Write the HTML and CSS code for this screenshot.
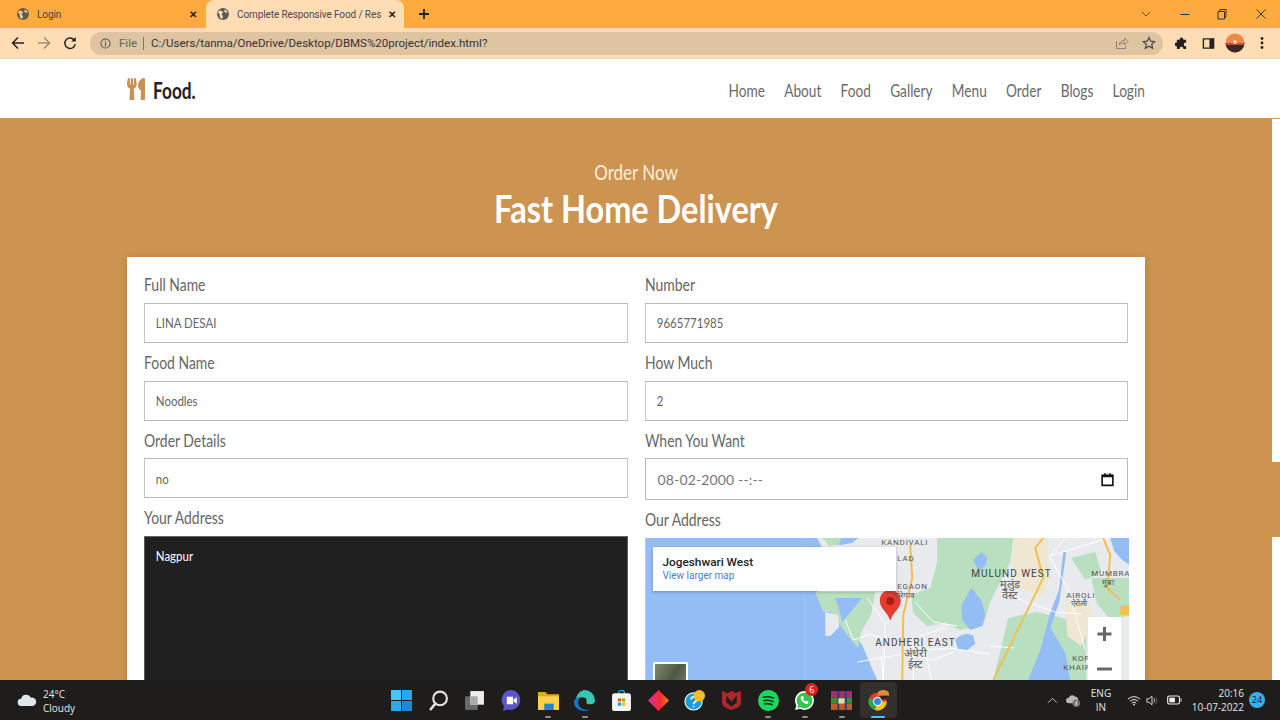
FILE: index.html
```html
<!DOCTYPE html>
<html lang="en">
<head>
  <meta charset="UTF-8">
  <meta name="viewport" content="width=device-width, initial-scale=1.0">
  <title>Complete Responsive Food / Restaurant Website</title>
  <link rel="stylesheet" href="styles.css">
</head>
<body>
  <!-- browser tabs -->
  <div class="tabstrip">
    <div class="tab">
      <svg class="globe" viewBox="0 0 12 12"><circle cx="6" cy="6" r="6" fill="#5f5c58"/><path d="M2 2.500l3 .5 1 1.500-1.500 1.500L6 8.500 5 11 3 9.500 2.500 6 1 4.500zM8 1.500l2 1.500.5 2-2-.5L7 3z" fill="#ffc680"/></svg>
      <span class="tab-title">Login</span>
      <span class="tab-close">✕</span>
    </div>
    <div class="tab active">
      <svg class="globe" viewBox="0 0 12 12"><circle cx="6" cy="6" r="6" fill="#5f5c58"/><path d="M2 2.500l3 .5 1 1.500-1.500 1.500L6 8.500 5 11 3 9.500 2.500 6 1 4.500zM8 1.500l2 1.500.5 2-2-.5L7 3z" fill="#fedcb4"/></svg>
      <span class="tab-title">Complete Responsive Food / Res</span>
      <span class="tab-close">✕</span>
    </div>
    <svg class="new-tab" viewBox="0 0 12 12"><path d="M6 1v10M1 6h10" stroke="#222" stroke-width="1.800"/></svg>
    <div class="window-controls">
      <svg viewBox="0 0 12 12"><path d="M2 4l4 4 4-4" fill="none" stroke="#6b4a1c"/></svg>
      <svg viewBox="0 0 12 12"><path d="M1.500 6.500h9" stroke="#333"/></svg>
      <svg class="restore" viewBox="0 0 12 12"><path d="M2 3.500h6.500V11H2zM4 3.500V1.500h6V9H8.500" fill="none" stroke="#333"/></svg>
      <svg viewBox="0 0 12 12"><path d="M1.500 1.500l9 9M10.500 1.500l-9 9" stroke="#333"/></svg>
    </div>
  </div>

  <!-- address bar -->
  <div class="toolbar">
    <svg class="nav-icon" viewBox="0 0 14 14"><path d="M13 7H2M7 1.500L1.500 7 7 12.500" fill="none" stroke="#222" stroke-width="1.500"/></svg>
    <svg class="nav-icon" viewBox="0 0 14 14"><path d="M1 7h11M7 1.500L12.500 7 7 12.500" fill="none" stroke="#a08c74" stroke-width="1.500"/></svg>
    <svg class="nav-icon" viewBox="0 0 14 14"><path d="M11.500 4.500A5.200 5.200 0 1 0 12.200 8" fill="none" stroke="#222" stroke-width="1.500"/><path d="M12.800 1v4.500H8.300z" fill="#222"/></svg>
    <div class="omnibox">
      <svg class="info-icon" viewBox="0 0 12 12"><circle cx="6" cy="6" r="5" fill="none" stroke="#555" stroke-width="1.100"/><path d="M6 5v4M6 3v1.200" stroke="#555" stroke-width="1.200"/></svg>
      <span class="scheme">File</span>
      <span class="url">C:/Users/tanma/OneDrive/Desktop/DBMS%20project/index.html?</span>
      <svg class="omni-icon" viewBox="0 0 14 14"><path d="M1.500 5v7.500h9V10M4 9c.500-3 3-4.500 5.500-4.500V2L13 5.500 9.500 9V6.800C7.500 6.800 5.500 7.500 4 9z" fill="none" stroke="#8f8474"/></svg>
      <svg class="omni-icon" viewBox="0 0 14 14"><path d="M7 1.500l1.700 3.700 4 .4-3 2.700.9 4L7 10.200l-3.600 2.100.9-4-3-2.700 4-.4z" fill="none" stroke="#444" stroke-width="1.200"/></svg>
    </div>
    <svg class="tool-icon puzzle" viewBox="0 0 14 14"><path d="M5 2.500a2 2 0 0 1 4 0V3h3v3h-.500a2 2 0 0 0 0 4h.500v3H9v-.500a2 2 0 0 0-4 0v.500H2v-3h-.500a2 2 0 0 1 0-4H2V3h3z" fill="#222"/></svg>
    <svg class="tool-icon" viewBox="0 0 14 14"><path d="M1.500 2h11v10h-11z" fill="none" stroke="#222" stroke-width="1.500"/><path d="M8 2h4.500v10H8z" fill="#222"/></svg>
    <svg class="avatar" viewBox="0 0 20 20"><defs><clipPath id="avatarClip"><circle cx="10" cy="10" r="9.500"/></clipPath></defs><g clip-path="url(#avatarClip)"><path d="M0 0h20v10H0z" fill="#ec8a4e"/><path d="M0 10h20v10H0z" fill="#3b2a26"/><path d="M0 10h20v2H0z" fill="#a85a3a"/><circle cx="10" cy="9" r="2" fill="#fbd9a0"/></g></svg>
    <svg class="menu-dots" viewBox="0 0 4 14"><circle cx="2" cy="2.500" r="1.400" fill="#222"/><circle cx="2" cy="7" r="1.400" fill="#222"/><circle cx="2" cy="11.500" r="1.400" fill="#222"/></svg>
  </div>

  <header class="site-header">
    <a class="logo" href="#">
      <svg class="logo-icon" viewBox="0 0 416 512"><path d="M207.900 15.200c.8 4.700 16.100 94.500 16.100 128.800 0 52.300-27.800 89.600-68.900 104.600L168 486.700c.7 13.700-10.200 25.300-24 25.300H80c-13.700 0-24.700-11.500-24-25.300l12.900-238.100C27.700 233.600 0 196.200 0 144 0 109.600 15.300 19.900 16.100 15.200 19.300-5.100 61.400-5.400 64 16.300v141.200c1.300 3.400 15.100 3.200 16 0 1.400-25.300 7.900-139.200 8-141.800 3.300-20.800 44.700-20.800 47.900 0 .2 2.700 6.600 116.500 8 141.800.9 3.200 14.800 3.400 16 0V16.300c2.600-21.600 44.800-21.400 48-1.100zm119.200 285.700l-15 185.100c-1.200 14 9.900 26 23.900 26h56c13.300 0 24-10.700 24-24V24c0-13.200-10.700-24-24-24-82.500 0-221.400 178.500-64.900 300.900z"/></svg>
      <span class="logo-text">Food.</span>
    </a>
    <nav class="site-nav">
      <a href="#">Home</a>
      <a href="#">About</a>
      <a href="#">Food</a>
      <a href="#">Gallery</a>
      <a href="#">Menu</a>
      <a href="#">Order</a>
      <a href="#">Blogs</a>
      <a href="#">Login</a>
    </nav>
  </header>

  <div class="page-row">
    <main class="order-section">
      <h3 class="sub-heading">Order Now</h3>
      <h1 class="heading">Fast Home Delivery</h1>

      <form class="order-form">
        <div class="form-col">
          <div class="field">
            <label>Full Name</label>
            <input type="text" value="LINA DESAI">
          </div>
          <div class="field">
            <label>Food Name</label>
            <input type="text" value="Noodles">
          </div>
          <div class="field">
            <label>Order Details</label>
            <input type="text" value="no">
          </div>
          <div class="field">
            <label>Your Address</label>
            <textarea>Nagpur</textarea>
          </div>
        </div>

        <div class="form-col">
          <div class="field">
            <label>Number</label>
            <input type="text" value="9665771985">
          </div>
          <div class="field">
            <label>How Much</label>
            <input type="text" value="2">
          </div>
          <div class="field">
            <label>When You Want</label>
            <div class="date-input">
              <span>08-02-2000 --:--</span>
              <svg viewBox="0 0 14 14"><path d="M2 3h10v9.500H2z" fill="none" stroke="#111" stroke-width="1.500"/><path d="M2 2.500h10V5H2zM4 1h1.200v2H4zM8.800 1H10v2H8.800z" fill="#111"/></svg>
            </div>
          </div>
          <div class="field">
            <label>Our Address</label>
            <div class="map">
              <svg class="map-canvas" viewBox="0 0 484 142">
                <path d="M0 0h484v142H0z" fill="#94bdf5"/>
                <path d="M160 0v142" stroke="#a6c8f6" stroke-width=".6"/>
                <!-- land -->
                <path d="M172 0l6 12-8 18 2 24 14 8 11 19 20 26 10 24 5 11h252V0z" fill="#e8eaed"/>
                <path d="M177 0h36l-6 5-12 2-12-2z" fill="#94bdf5"/>
                <!-- green patches -->
                <path d="M170 54l60 0-4 22-10 18-3 16-12-14-15-22-8 0z" fill="#b7dfc0"/>
                <path d="M190 60h27l-20 24-3-12z" fill="#94bdf5"/>
                <path d="M180 74l13 3 1 12-9 9h-5z" fill="#e8eaed"/>
                <path d="M178 0h18l-2 6-10 2z" fill="#b7dfc0"/>
                <path d="M292 0h76l-3 24-20 40-7 23-23 5-15-7-18 3-14-13-2-18 19-7 7-26z" fill="#b7dfc0"/>
                <path d="M368 0h34l2 40-6 18-24-8-8-26z" fill="#efe7d2"/>
                <path d="M363 80l28-6 18 4 32 8v56h-93z" fill="#b7dfc0"/>
                <path d="M446 40h38v38l-20 2-12-14zM426 20l24-6 6 20-16 8z" fill="#b7dfc0"/>
                <path d="M420 62l24 2 4 18-12 26-14-10z" fill="#efe7d2"/>
                <!-- water -->
                <path d="M328 22l8-8 6 6-2 8-7 4zM316 68l10-18 10 12 4 14-3 12-12 4-8-10z" fill="#94bdf5"/>
                <path d="M310 102c4-6 14-8 18-4l2 8-8 6-9 0z" fill="#94bdf5"/>
                <path d="M418 14h3l-7 50-9 26 15 25 5 27h-42l12-30 10-37 9-24z" fill="#94bdf5"/>
                <path d="M465 0h19v27l-8-6-7-8z" fill="#94bdf5"/>
                <!-- roads -->
                <path d="M222 60l18 26 4-4M200 82l8 20 18-6 22 10M240 86l-2 56M270 64l18 20 24 4M300 90l-26 8M212 124l46-8 30 6 20-8M258 106l24 6 22-2 40 6M345 108l24 2M366 56l14 8 30 10 26 2M268 104v38M236 118l2 24M280 112l6 30M420 0l-16 18 26-8 34-10M404 18l18 32 6 20 12 42" fill="none" stroke="#fff" stroke-width="1"/>
                <path d="M265 7l2 33-9 37-1 65M398 0l-8 10 8 30-50 102M458 0l7 17-3 33 13 12" fill="none" stroke="#f2c04e" stroke-width="2"/>
                <rect x="475" y="67" width="10" height="10" rx="2" fill="#f2c04e"/>
                <path d="M245 52c-6 0-10.500 4.500-10.500 10.500 0 8 7.500 11 10.500 20 3-9 10.500-12 10.500-20C255.500 56.500 251 52 245 52z" fill="#e53b30"/>
                <circle cx="245" cy="63" r="4" fill="#a81e16"/>
                <g class="map-label">
                  <text x="236" y="7">KANDIVALI</text>
                  <text x="252" y="23">LAD</text>
                  <text x="252" y="51">EGAON</text>
                  <text x="326" y="39" class="big">MULUND WEST</text>
                  <text x="446" y="38">MUMBRA</text>
                  <text x="421" y="60">AIROLI</text>
                  <text x="230" y="108" class="big">ANDHERI EAST</text>
                  <text x="427" y="123">KOP</text>
                  <text x="418" y="132">KHAIR</text>
                </g>
                <g class="map-label local">
                  <text x="365" y="50">मुलुंड</text>
                  <text x="365" y="61">वेस्ट</text>
                  <text x="270" y="119">अंधेरी</text>
                  <text x="270" y="130">ईस्ट</text>
                  <text x="463" y="47" class="small">मुंब्रा</text>
                  <text x="434" y="68" class="small">ऐरोली</text>
                  <text x="258" y="60" class="small">गोरेगाव</text>
                </g>
              </svg>
              <div class="map-card">
                <div class="map-place">Jogeshwari West</div>
                <a class="map-link" href="#">View larger map</a>
              </div>
              <div class="map-thumb"></div>
              <div class="map-zoom">
                <svg viewBox="0 0 33 35"><path d="M16.500 10v14M9.500 17h14" stroke="#666" stroke-width="3"/></svg>
                <svg viewBox="0 0 33 35"><path d="M9 17h15" stroke="#666" stroke-width="3"/></svg>
              </div>
            </div>
          </div>
        </div>
      </form>
    </main>
    <div class="scroll-strip">
      <div class="strip-white strip-top"></div>
      <div class="strip-gap"></div>
      <div class="strip-white strip-bottom"></div>
    </div>
  </div>

  <!-- windows taskbar -->
  <footer class="taskbar">
    <div class="weather">
      <svg viewBox="0 0 22 14"><path d="M5 13.500a4 4 0 0 1-.5-8 6 6 0 0 1 11-1 4.500 4.500 0 0 1 2 9z" fill="#dfe6ee"/></svg>
      <div class="weather-text"><div>24°C</div><div>Cloudy</div></div>
    </div>
    <div class="task-icons">
      <div class="task-item"><svg viewBox="0 0 20 20"><path d="M0 0h9.500v9.500H0z" fill="#4cc2ff"/><path d="M10.500 0H20v9.500h-9.500z" fill="#29a8ee"/><path d="M0 10.500h9.500V20H0z" fill="#29a8ee"/><path d="M10.500 10.500H20V20h-9.500z" fill="#1a8ad8"/></svg></div>
      <div class="task-item"><svg viewBox="0 0 20 20"><circle cx="11.500" cy="8" r="6.500" fill="none" stroke="#e4e4e4" stroke-width="2"/><path d="M7 13l-5 6" stroke="#e4e4e4" stroke-width="2.400"/></svg></div>
      <div class="task-item"><svg viewBox="0 0 20 20"><path d="M1 6h12v13H1z" fill="#6a6a6a"/><path d="M6 1h13v13H6z" fill="#ededed"/><path d="M6 6h7v8H6z" fill="#aaa"/></svg></div>
      <div class="task-item"><svg viewBox="0 0 20 20"><path d="M10 0a9.500 9.500 0 1 1-4 18.500L2 20l.8-4.500A9.500 9.500 0 0 1 10 0z" fill="#5b57c9"/><path d="M5.500 6.500h6v7h-6zM12 9l3-2v6l-3-2z" fill="#fff"/></svg></div>
      <div class="task-item running"><svg viewBox="0 0 20 20"><path d="M0 2h7l2 2h11v4H0z" fill="#e3a91e"/><path d="M0 6h20v13H0z" fill="#fbd24a"/><path d="M6 13h9v6H6z" fill="#1d87d6"/></svg></div>
      <div class="task-item running"><svg viewBox="0 0 20 20"><path d="M10 0a10 10 0 0 1 10 10c0 3-3 4-6 3.500-3 0-2-2.500-2-3.500 0-2-2-3-4-3-4 0-6 3-6 5A10 10 0 0 1 10 0z" fill="#37c6b0"/><path d="M0 12c0-3 2-5 6-5 1 0-2 1-2 5 0 4 4 7 8 7 2 0 3-.5 4-1-2 1.500-4 2-6 2-6 0-10-4-10-8z" fill="#1a73c9"/></svg></div>
      <div class="task-item"><svg viewBox="0 0 20 20"><path d="M7 4c0-5 6-5 6 0" fill="none" stroke="#3aa0d8" stroke-width="1.300"/><rect x="1" y="3" width="18" height="17" rx="2.500" fill="#f4f4f4"/><path d="M6.500 8h3v3h-3z" fill="#e8532a"/><path d="M10.500 8h3v3h-3z" fill="#7fba00"/><path d="M6.500 12h3v3h-3z" fill="#00a4ef"/><path d="M10.500 12h3v3h-3z" fill="#ffb900"/></svg></div>
      <div class="task-item"><svg viewBox="0 0 20 20"><defs><linearGradient id="diamondFill" x1="0" y1="0" x2="1" y2="0"><stop offset="0" stop-color="#e02aa0"/><stop offset=".6" stop-color="#f0302c"/><stop offset="1" stop-color="#f57c14"/></linearGradient></defs><path d="M10 0l10 10-10 10L0 10z" fill="url(#diamondFill)"/></svg></div>
      <div class="task-item"><svg viewBox="0 0 22 22"><circle cx="10" cy="12" r="9" fill="#1f9ad6" stroke="#dff" stroke-width="1.200"/><path d="M7.500 10a2.800 2.800 0 1 1 4 2.500c-1 .5-1.500 1-1.500 2.500M10 16.500v1.500" fill="none" stroke="#fff" stroke-width="1.800"/><circle cx="16" cy="6" r="6" fill="#f6bd2a"/></svg></div>
      <div class="task-item"><svg viewBox="0 0 20 20"><path d="M1 1l5 2 4-2 4 2 5-2v11c0 4-5 6-9 7-4-1-9-3-9-7z" fill="#b2262b"/><path d="M5 5l5 6 5-6v7l-5 4-5-4z" fill="#1f1d1c"/></svg></div>
      <div class="task-item running"><svg viewBox="0 0 20 20"><circle cx="10" cy="10" r="10" fill="#1ed760"/><path d="M4.500 7c4-1 8-.8 11 1M5 10.300c3.500-.8 7-.5 9.800 1M5.500 13.300c3-.6 6-.4 8.500.9" fill="none" stroke="#14311f" stroke-width="1.500"/></svg></div>
      <div class="task-item running"><svg viewBox="0 0 20 20"><path d="M10 1a9 9 0 0 1 0 18c-1.500 0-3-.4-4.300-1.100L1 19l1.200-4.500A9 9 0 0 1 10 1z" fill="#fff"/><path d="M10 2.500a7.500 7.500 0 0 1 0 15c-1.300 0-2.700-.4-3.900-1.100l-3 .8.800-2.900A7.500 7.500 0 0 1 10 2.500z" fill="#37c34c"/><path d="M7 6c-1 1-1 3 1 5s4 3 5 2l1-1.500-2-1.500-1 1c-1-.5-2-1.500-2.300-2.500l1-1L8.300 5.500z" fill="#fff"/></svg><span class="notify-badge">6</span></div>
      <div class="task-item running"><svg viewBox="0 0 20 20"><path d="M0 1h20v6H0z" fill="#a92c6b"/><path d="M0 7h20v6H0z" fill="#3d8c3a"/><path d="M0 13h20v6H0z" fill="#c75a22"/><path d="M6 1h2v18H6zM13 1h2v18h-2z" fill="#2c3f88"/><path d="M7 8h6v5H7z" fill="#e5d9a6"/></svg></div>
      <div class="task-item current"><svg viewBox="0 0 22 22"><circle cx="10" cy="12" r="9.500" fill="#e0392d"/><path d="M10 12L19.500 12A9.500 9.500 0 0 1 7 21z" fill="#f5c518"/><path d="M10 12L7 21A9.500 9.500 0 0 1 1.300 8z" fill="#2ea44f"/><circle cx="10" cy="12" r="4.800" fill="#fff"/><circle cx="10" cy="12" r="3.700" fill="#3f83e6"/><path d="M10 4a6 4 0 0 1 12 0v2H10z" fill="#e08a3c"/><path d="M12 6h9l-3 4h-4z" fill="#33231c"/></svg></div>
    </div>
    <div class="tray">
      <svg class="tray-chevron" viewBox="0 0 12 8"><path d="M1 6.500l5-5 5 5" fill="none" stroke="#d8d8d8"/></svg>
      <svg class="tray-cloud" viewBox="0 0 16 14"><path d="M3 10a3 3 0 0 1 0-6 4 4 0 0 1 7-1 3 3 0 0 1 3 4H8v3z" fill="#b8b8b8"/><circle cx="11" cy="10" r="4" fill="#777"/><path d="M11 8v4" stroke="#eee" stroke-width="1.200"/></svg>
      <div class="tray-lang"><div>ENG</div><div>IN</div></div>
      <svg class="tray-wifi" viewBox="0 0 16 12"><path d="M1 4.500a10 10 0 0 1 14 0M3.300 6.800a6.800 6.800 0 0 1 9.400 0M5.500 9a3.500 3.500 0 0 1 5 0" fill="none" stroke="#eee" stroke-width="1.100"/><circle cx="8" cy="10.700" r="1" fill="#eee"/></svg>
      <svg class="tray-sound" viewBox="0 0 14 12"><path d="M1 4h2.500L7 1v10L3.500 8H1z" fill="none" stroke="#eee"/><path d="M9 3.500a3.500 3.500 0 0 1 0 5" fill="none" stroke="#eee"/><path d="M11 2a6 6 0 0 1 0 8" fill="none" stroke="#666"/></svg>
      <svg class="tray-battery" viewBox="0 0 16 10"><rect x=".7" y=".7" width="12.600" height="8.600" rx="2" fill="none" stroke="#eee" stroke-width="1.200"/><rect x="2.500" y="2.500" width="6" height="5" fill="#eee"/><path d="M14.500 3.500h1v3h-1z" fill="#eee"/></svg>
      <div class="tray-clock"><div>20:16</div><div>10-07-2022</div></div>
      <span class="tray-badge">24</span>
    </div>
  </footer>
</body>
</html>
```

FILE: styles.css
```css
* {
  box-sizing: border-box;
}

html, body {
  height: 100%;
}

body {
  margin: 0;
  height: 720px;
  display: flex;
  flex-direction: column;
  overflow: hidden;
  font-family: Lato, "Liberation Sans", sans-serif;
  background: #cc9450;
}

/* browser chrome */
.tabstrip {
  height: 28px;
  flex: none;
  display: flex;
  align-items: center;
  background: #ffaa3e;
  font-family: Roboto, sans-serif;
  font-size: 10px;
  color: #444;
}

.tab {
  width: 206px;
  height: 28px;
  display: flex;
  align-items: center;
  padding: 0 5px 0 17px;
  flex: none;
}

.tab.active {
  width: 198px;
  padding: 0 4px 0 11px;
  background: #fedcb4;
  border-radius: 8px 8px 0 0;
  color: #4a4a4a;
}

.globe {
  width: 12px;
  height: 12px;
  flex: none;
  margin-right: 8px;
}

.tab-title {
  flex: 1;
  white-space: nowrap;
  overflow: hidden;
  letter-spacing: -0.1px;
}

.tab-close {
  font-size: 10px;
  font-weight: bold;
  color: #222;
  width: 16px;
  text-align: center;
  margin-left: 2px;
}

.new-tab {
  width: 12px;
  height: 12px;
  margin-left: 14px;
}

.window-controls {
  margin-left: auto;
  display: flex;
  align-items: center;
  gap: 27px;
  padding-right: 13px;
}

.window-controls svg {
  width: 12px;
  height: 12px;
}

.window-controls .restore {
  margin-left: -2px;
}

.toolbar {
  height: 31px;
  flex: none;
  display: flex;
  align-items: center;
  background: #fedcb4;
  padding: 0 0 0 11px;
  border-bottom: 1px solid #f3d5af;
}

.nav-icon {
  width: 14px;
  height: 14px;
  margin-right: 12px;
  flex: none;
}

.omnibox {
  width: 1073px;
  height: 23px;
  margin-left: 1px;
  flex: none;
  display: flex;
  align-items: center;
  background: #dfc4a2;
  border-radius: 12px;
  padding: 0 7px 0 10px;
  font-family: Roboto, sans-serif;
  font-size: 11.500px;
  color: #333;
}

.info-icon {
  width: 11px;
  height: 11px;
  margin-right: 8px;
}

.scheme {
  color: #666;
  padding-right: 6px;
  margin-right: 7px;
  border-right: 1px solid #777;
  line-height: 13px;
}

.url {
  flex: 1;
  white-space: nowrap;
}

.omni-icon {
  width: 14px;
  height: 14px;
  margin-left: 13px;
}

.tool-icon {
  width: 13px;
  height: 13px;
  margin-left: 14px;
  flex: none;
}

.tool-icon.puzzle {
  margin-left: 11.500px;
}

.avatar {
  width: 20px;
  height: 20px;
  margin-left: 10.500px;
  flex: none;
}

.menu-dots {
  width: 4px;
  height: 14px;
  margin-left: 15px;
}

/* site header */
.site-header {
  height: 60px;
  flex: none;
  display: flex;
  align-items: center;
  justify-content: space-between;
  padding: 3px 135px 0 127px;
  background: #fff;
  border-bottom: 1px solid #c79a5e;
}

.logo {
  display: flex;
  align-items: center;
  gap: 8px;
  color: #222;
  text-decoration: none;
}

.logo-text {
  font-size: 23px;
  font-weight: 700;
  transform: scaleX(0.75);
  transform-origin: left center;
}

.logo-icon {
  width: 18px;
  height: 22px;
  margin-top: -2px;
  fill: #c8914f;
}

.site-nav {
  display: flex;
  gap: 25.300px;
  transform: scaleX(0.76);
  transform-origin: right center;
}

.site-nav a {
  font-size: 18px;
  color: #6a6a6a;
  text-decoration: none;
}

/* order section */
.page-row {
  flex: 1;
  min-height: 0;
  display: flex;
  overflow: hidden;
}

.order-section {
  flex: 1;
  min-width: 0;
  padding-top: 41px;
  text-align: center;
  background: #cc9450;
}

.sub-heading {
  margin: 0;
  font-size: 21px;
  line-height: 24px;
  font-weight: normal;
  color: #fbeedd;
  transform: scaleX(0.81);
}

.heading {
  margin: 1px 0 26px;
  font-size: 39px;
  line-height: 46px;
  font-weight: 700;
  color: #fff;
  transform: scaleX(0.833);
}

.order-form {
  width: 1018px;
  margin: 0 auto;
  padding: 16px 17px 0;
  display: grid;
  grid-template-columns: minmax(0, 1fr) minmax(0, 1fr);
  column-gap: 17px;
  background: #fff;
  text-align: left;
  box-shadow: 0 2px 8px rgba(0, 0, 0, 0.15);
}

.field {
  margin-bottom: 8px;
}

.field label {
  display: block;
  height: 23.800px;
  line-height: 24px;
  margin-bottom: 6px;
  font-size: 17px;
  color: #666;
  transform: scaleX(0.82);
  transform-origin: left center;
}

.field input {
  display: block;
  width: 121.800%;
  height: 40px;
  padding: 0 13.400px;
  border: 1px solid #b9b9b9;
  border-radius: 0;
  font-family: inherit;
  font-size: 14px;
  color: #666;
  background: #fff;
  outline: none;
  transform: scaleX(0.82);
  transform-origin: left center;
}

.form-col:first-child .field input {
  width: 121.950%;
}

.date-input {
  display: flex;
  align-items: center;
  justify-content: space-between;
  width: 100%;
  height: 41.500px;
  padding: 0 12px;
  border: 1px solid #b9b9b9;
  font-size: 14px;
  letter-spacing: 0.150px;
  color: #777;
  background: #fff;
}

.date-input svg {
  width: 15px;
  height: 15px;
}

.field textarea {
  display: block;
  width: 121.950%;
  height: 240px;
  padding: 10px 13.400px;
  border: 1px solid #666;
  border-radius: 0;
  background: #202020;
  color: #fff;
  font-family: inherit;
  font-size: 14px;
  resize: none;
  outline: none;
  transform: scaleX(0.82);
  transform-origin: left center;
}

/* embedded map */
.map {
  position: relative;
  width: calc(100% + 1px);
  height: 142px;
  overflow: hidden;
}

.map-canvas {
  display: block;
  width: 100%;
  height: 100%;
}

.map-label text {
  font-family: Roboto, sans-serif;
  font-size: 8px;
  letter-spacing: 0.800px;
  fill: #555;
}

.map-label .big {
  font-size: 10px;
  letter-spacing: 1px;
  fill: #444;
}

.map-label.local text {
  font-size: 11px;
  letter-spacing: 0;
  fill: #555;
  text-anchor: middle;
}

.map-label.local .small {
  font-size: 8px;
}

.map-card {
  position: absolute;
  left: 8px;
  top: 9px;
  width: 243px;
  height: 44px;
  padding: 8px 10px;
  background: #fff;
  box-shadow: 0 1px 3px rgba(0, 0, 0, 0.25);
  font-family: Roboto, sans-serif;
}

.map-place {
  font-size: 11.800px;
  line-height: 14px;
  font-weight: 500;
  color: #222;
}

.map-link {
  display: block;
  font-size: 10px;
  line-height: 14px;
  color: #4a7fd8;
  text-decoration: none;
}

.map-thumb {
  position: absolute;
  left: 8px;
  top: 124px;
  width: 35px;
  height: 40px;
  border: 2px solid #fff;
  border-radius: 2px;
  background: linear-gradient(120deg, #7f8a6a, #4d5a42 50%, #8c8d78);
}

.map-zoom {
  position: absolute;
  left: 443px;
  top: 79px;
  width: 33px;
  height: 70px;
  background: #fff;
}

.map-zoom svg {
  display: block;
  width: 33px;
  height: 35px;
}

.scroll-strip {
  width: 8px;
  flex: none;
  display: flex;
  flex-direction: column;
}

.strip-white {
  background: #fff;
}

.strip-top {
  height: 343px;
}

.strip-gap {
  height: 75px;
}

.strip-bottom {
  flex: 1;
}

/* taskbar */
.taskbar {
  height: 40px;
  flex: none;
  display: flex;
  align-items: center;
  background: #1f1d1c;
  color: #e6e6e6;
  font-family: "Open Sans", sans-serif;
  font-size: 10px;
}

.weather {
  width: 383px;
  flex: none;
  display: flex;
  align-items: center;
  padding-left: 17px;
  gap: 6px;
}

.weather svg {
  width: 20px;
  height: 14px;
}

.weather-text {
  line-height: 14px;
  margin-top: 2px;
}

.task-icons {
  display: flex;
}

.task-item {
  position: relative;
  width: 36.700px;
  height: 36px;
  display: flex;
  align-items: center;
  justify-content: center;
  border-radius: 4px;
}

.task-item svg {
  width: 21px;
  height: 21px;
}

.task-item.running::after,
.task-item.current::after {
  content: "";
  position: absolute;
  left: 50%;
  bottom: 0;
  width: 6px;
  height: 2px;
  margin-left: -3px;
  border-radius: 1px;
  background: #8e8e8e;
}

.task-item.current {
  background: #322f2d;
}

.task-item.current::after {
  width: 14px;
  margin-left: -7px;
  background: #4cc2ff;
}

.notify-badge {
  position: absolute;
  top: 1px;
  right: 5px;
  width: 13px;
  height: 13px;
  border-radius: 50%;
  background: #e02020;
  color: #fff;
  font-size: 9px;
  line-height: 13px;
  text-align: center;
}

.tray {
  margin-left: auto;
  display: flex;
  align-items: center;
  padding-right: 15px;
}

.tray-chevron {
  width: 11px;
  height: 7px;
}

.tray-cloud {
  width: 15px;
  height: 13px;
  margin-left: 8px;
}

.tray-lang {
  margin-left: 7px;
  width: 26px;
  text-align: center;
  line-height: 14px;
}

.tray-wifi {
  width: 14px;
  height: 11px;
  margin-left: 13px;
}

.tray-sound {
  width: 12px;
  height: 11px;
  margin-left: 5px;
}

.tray-battery {
  width: 15px;
  height: 10px;
  margin-left: 9px;
}

.tray-clock {
  width: 60px;
  margin-left: 2px;
  text-align: right;
  line-height: 14px;
}

.tray-badge {
  width: 16px;
  height: 16px;
  margin-left: 5px;
  border-radius: 50%;
  background: #36b0ee;
  color: #14222c;
  font-size: 9px;
  line-height: 16px;
  text-align: center;
}
```
